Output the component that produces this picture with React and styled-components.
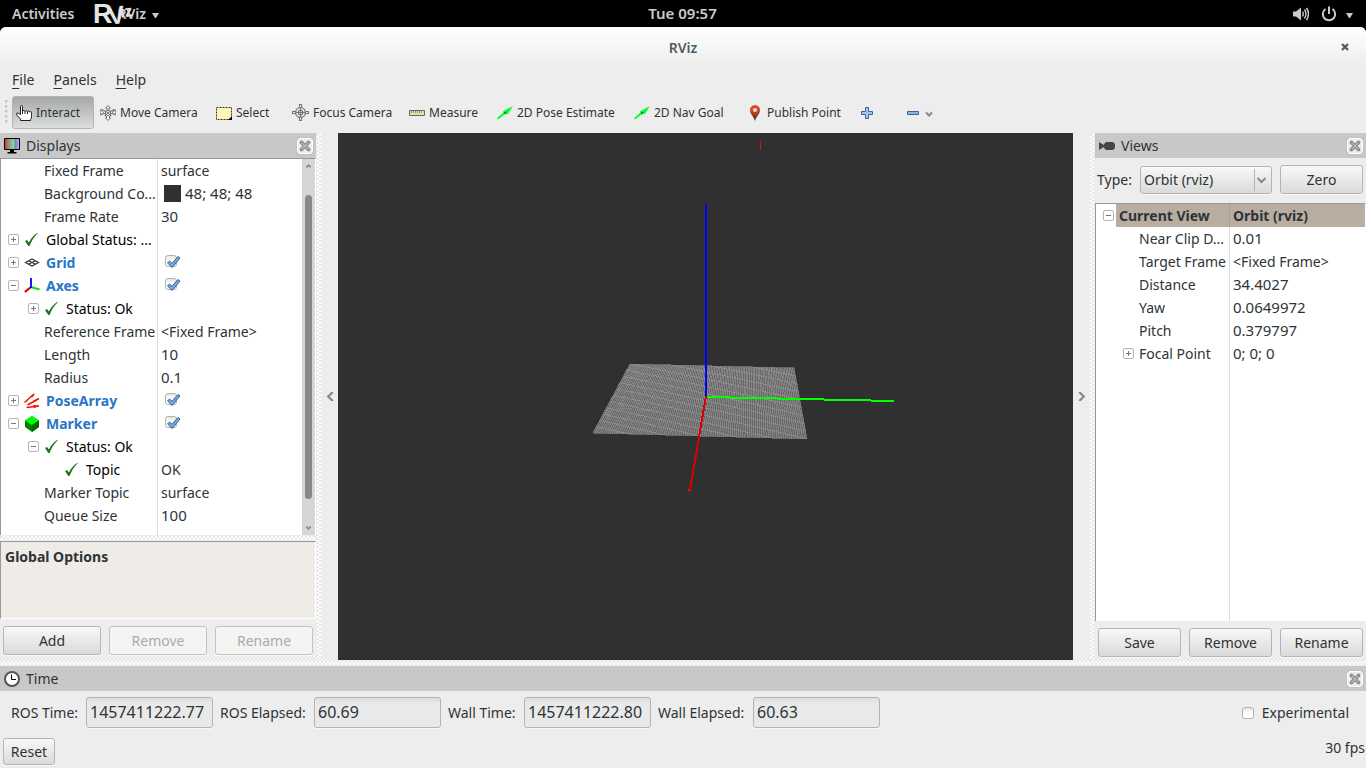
import React, { useState } from 'react'
import styled, { createGlobalStyle, css } from 'styled-components'

const GlobalStyle = createGlobalStyle`
  * {
    box-sizing: border-box;
  }
  body {
    margin: 0;
    background: #000;
  }
  body, button, input, select {
    font-family: 'Noto Sans', 'Open Sans', sans-serif;
    font-size: 14px;
    color: #2e3436;
  }
`

const Desktop = styled.div`
  display: flex;
  flex-direction: column;
  min-height: 100vh;
  background: #000;
`

const TopBar = styled.header`
  display: grid;
  grid-template-columns: 1fr auto 1fr;
  align-items: center;
  height: 27px;
  padding: 0 13px 0 12px;
  color: #ccc;
`

const TopGroup = styled.div`
  display: flex;
  align-items: center;
  gap: ${props => props.$gap}px;
  justify-content: ${props => (props.$end ? 'flex-end' : 'flex-start')};
`

const TopButton = styled.button`
  position: relative;
  display: flex;
  align-items: center;
  gap: ${props => props.$gap || 6}px;
  padding: 0;
  border: 0;
  background: none;
  color: #ccc;
  font-size: ${props => (props.$clock ? 15 : 14)}px;
  font-weight: 600;
  line-height: 27px;
`

const MenuArrow = styled.span`
  width: 7px;
  margin-top: 4px;
  border: solid transparent;
  border-width: 5px 3px 0;
  border-top-color: #ccc;
`

const Logo = styled.svg`
  position: absolute;
  left: -24px;
  top: 0;
  overflow: visible;
  pointer-events: none;
`

const Window = styled.div`
  display: flex;
  flex: 1;
  flex-direction: column;
  background: #ededed;
  border-radius: 6px 6px 0 0;
`

const TitleBar = styled.div`
  display: grid;
  grid-template-columns: 1fr auto 1fr;
  align-items: center;
  height: 40px;
  padding: 0 17px;
  border-radius: 6px 6px 0 0;
  background: linear-gradient(#fff, #ededed);
`

const Title = styled.h1`
  grid-column: 2;
  margin: 0;
  font-size: 14px;
  font-weight: 600;
  color: #4f5d63;
`

const PlainButton = styled.button`
  display: flex;
  justify-self: end;
  padding: 0;
  border: 0;
  background: none;
`

const MenuBar = styled.nav`
  display: flex;
  gap: 19px;
  height: 27px;
  padding: 0 12px 2px;
`

const MenuItem = styled.button`
  padding: 0;
  border: 0;
  background: none;
  line-height: 25px;

  &::first-letter {
    text-decoration: underline;
    text-underline-offset: 3px;
  }
`

const ToolBar = styled.div`
  display: flex;
  gap: 2px;
  height: 39px;
  padding: 2px 5px 4px;
`

const Grip = styled.div`
  width: 5px;
  margin: 4px 0;
  background: radial-gradient(circle at 1px 1px, #c4c4c4 1px, transparent 2px) 0 0 / 5px 5px;
`

const Tool = styled.button`
  display: flex;
  align-items: center;
  gap: 4px;
  width: ${props => props.$width}px;
  padding: 0 3px;
  border: 1px solid transparent;
  border-radius: 3px;
  background: none;
  font-size: 12px;
  white-space: nowrap;
  ${props =>
    props.$active &&
    css`
      border-color: #b4b6b4;
      background: linear-gradient(#a5a8a4, #dcdedc);
    `}
`

const Main = styled.main`
  display: flex;
  flex: 1;
`

const Dock = styled.section`
  display: flex;
  flex-direction: column;
  width: ${props => props.$width}px;
`

const DockHeader = styled.div`
  display: flex;
  align-items: center;
  gap: 6px;
  height: 25px;
  padding: 0 3px 0 4px;
  background: #c8c8c8;
`

const DockTitle = styled.h2`
  flex: 1;
  margin: 0;
  font-size: 14px;
  font-weight: 400;
`

const CloseBox = styled.button`
  display: flex;
  align-items: center;
  justify-content: center;
  width: 16px;
  height: 16px;
  padding: 0;
  border: 1px solid #fff;
  border-radius: 3px;
  background: #ececec;
  box-shadow: 0 0 1px #888;
`

const Splitter = styled.div`
  flex: none;
  ${props => (props.$vertical ? 'width: 6px;' : 'height: 6px;')}
  border: 1px solid #ededed;
  background: repeating-conic-gradient(#fff 0 25%, #e8e8e8 0 50%) 0 0 / 4px 4px;
`

const Collapse = styled.button`
  display: flex;
  flex: none;
  align-items: center;
  justify-content: center;
  width: 16px;
  padding: 0;
  border: 0;
  background: none;
`

const Viewport = styled.div`
  flex: 1;
  min-width: 0;
  background: #303030;

  svg {
    display: block;
    width: 100%;
    height: 100%;
  }
`

const TreeBox = styled.div`
  display: flex;
  flex: 1;
  border: solid #999;
  border-width: 1px 1px 0 1px;
  border-right-color: #fff;
  background: #fff;
`

const TreeArea = styled.div`
  flex: 1;
  background: linear-gradient(#ddd, #ddd) ${props => props.$nameWidth}px 0 / 1px 100% no-repeat;
`

const Tree = styled.table`
  width: 100%;
  border-collapse: collapse;
  table-layout: fixed;
`

const NameCol = styled.col`
  width: ${props => props.$width + 1}px;
`

const NameCell = styled.td`
  height: 23px;
  padding: 0 1px 0 ${props => 7 + props.$level * 20}px;
`

const NameInner = styled.div`
  display: flex;
  align-items: center;
  height: 23px;

  svg {
    flex: none;
    margin-right: 6px;
  }
`

const NameText = styled.span`
  white-space: nowrap;
  line-height: 23px;
  color: ${props => props.$color || '#2e3436'};
  font-weight: ${props => (props.$bold ? 700 : 400)};
`

const Expander = styled.button`
  flex: none;
  width: 11px;
  height: 11px;
  margin-right: 5px;
  padding: 0;
  border: 1px solid #b5b5b5;
  border-radius: 2px;
  background: ${props =>
      !props.$open && 'linear-gradient(#777, #777) center / 1px 5px no-repeat,'}
    linear-gradient(#777, #777) center / 5px 1px no-repeat, #fff;
`

const ExpanderSpace = styled.span`
  flex: none;
  width: 16px;
`

const ValueCell = styled.td`
  height: 23px;
  padding: 0 3px;
  line-height: 23px;
  font-size: ${props => (props.$numeric ? 15 : 14)}px;
  white-space: nowrap;
`

const Row = styled.tr`
  ${props =>
    props.$selected &&
    css`
      font-weight: 700;

      td:first-child {
        background: linear-gradient(#b9aca1, #b9aca1) 20px 0 no-repeat;
        box-shadow: inset -1px 0 #a99e94;
      }
      td:last-child {
        background: #b9aca1;
      }
    `}
`

const ColorValue = styled.span`
  display: flex;
  align-items: center;
  gap: 4px;
  padding-left: 3px;

  &::before {
    content: '';
    width: 17px;
    height: 17px;
    background: #303030;
  }
`

const CheckHolder = styled.label`
  position: relative;
  display: block;
  width: 18px;
  height: 18px;

  svg {
    position: absolute;
    left: 5px;
    top: 0;
    pointer-events: none;
  }
`

const CheckBox = styled.input`
  appearance: none;
  display: block;
  width: 12px;
  height: 12px;
  margin: ${props => props.$margin || '0'};
  border: 1px solid #b3b3a8;
  border-radius: 3px;
  background: linear-gradient(#e6e6e2, #fff 50%);
`

const ScrollBar = styled.div`
  display: flex;
  flex-direction: column;
  align-items: center;
  justify-content: space-between;
  width: 13px;
  padding: 4px 0;
  background: #d6d6d6;
`

const ScrollTrack = styled.div`
  flex: 1;
  width: 7px;
  padding: 25px 0;
`

const ScrollThumb = styled.div`
  height: 100%;
  border-radius: 4px;
  background: #858988;
`

const Description = styled.div`
  height: 78px;
  padding: 5px 4px;
  border: 1px solid #fff;
  border-top-color: #999;
  border-left-color: #999;
  background: #efebe7;
  font-weight: 700;
`

const ButtonRow = styled.div`
  display: flex;
  gap: 8px;
  padding: ${props => props.$padding};
`

const Button = styled.button`
  flex: ${props => (props.$width ? 'none' : 1)};
  width: ${props => (props.$width ? `${props.$width}px` : 'auto')};
  height: ${props => props.$height || 29}px;
  padding: 0 0 1px;
  border: 1px solid #b4b4b4;
  border-radius: 3px;
  background: linear-gradient(#f8f8f8, #dadada);
  box-shadow: 0 1px #f8f8f8;

  &:disabled {
    border-color: #c2c2c0;
    background: #f4f4f2;
    color: #a9acaa;
  }
`

const TypeRow = styled.div`
  display: flex;
  align-items: center;
  height: 45px;
  padding: 0 3px 2px 2px;
`

const TypeLabel = styled.label`
  width: 43px;
`

const SelectHolder = styled.div`
  position: relative;
  flex: 1;
  margin-right: 8px;

  svg {
    position: absolute;
    right: 0;
    top: 0;
    pointer-events: none;
  }
`

const Select = styled.select`
  appearance: none;
  display: block;
  width: 100%;
  height: 28px;
  padding: 0 3px;
  border: 1px solid #b4b4b4;
  border-radius: 3px;
  background: linear-gradient(#f8f8f8, #dadada);
  box-shadow: 0 1px #f8f8f8;
`

const TimeRow = styled.div`
  display: flex;
  align-items: center;
  gap: 7px;
  height: 44px;
  padding: 0 17px 1px 11px;
`

const TimeField = styled.div`
  display: flex;
  align-items: center;
`

const TimeLabel = styled.label`
  width: ${props => props.$width}px;
  white-space: nowrap;
`

const TimeInput = styled.input`
  width: 127px;
  height: 31px;
  padding: 0 3px 1px;
  border: 1px solid #b4b4b4;
  border-radius: 3px;
  background: linear-gradient(#dedede, #e9e9e9 6px);
  box-shadow: 0 1px #f8f8f8;
  font-size: 16px;
`

const Experimental = styled.label`
  display: flex;
  align-items: center;
  gap: 8px;
  margin-left: auto;
`

const StatusRow = styled.div`
  display: flex;
  justify-content: space-between;
  padding: 3px 1px 3px 3px;
`

const Fps = styled.span`
  line-height: 20px;
`

const Cross = () => (
  <svg width="12" height="12" viewBox="0 0 12 12">
    <path d="M2.500 2.500l7 7M9.500 2.500l-7 7" stroke="#858782" strokeWidth="3.600" strokeLinecap="round" />
    <path d="M2.500 2.500l7 7M9.500 2.500l-7 7" stroke="#b9bab6" strokeWidth="1.400" />
  </svg>
)

const Chevron = ({ d, size = 8, color = '#888a85', width = 2 }) => (
  <svg width={size} height={size} viewBox="0 0 8 8" fill="none">
    <path d={d} stroke={color} strokeWidth={width} />
  </svg>
)

const UP = 'M1.500 5L4 2.500 6.500 5'
const DOWN = 'M1.500 3L4 5.500 6.500 3'

const Svg = ({ children, size = 16 }) => (
  <svg width={size} height={size} viewBox="0 0 16 16" fill="none">
    {children}
  </svg>
)

const icons = {
  hand: (
    <Svg>
      <path
        d="M4.500 9.500V1.800q0-1.200 1-1.200t1 1.200v4.700q.2-1 1.200-1t1.300 1.200q.2-1 1.200-1t1.300 1.200q.2-.9 1.200-.9t1.200 1.200q.2-.6.900-.6.800 0 .8 1.200V12q0 1.500-1 2.200v1.300H4.500v-1.400L.8 10Q.1 8.800 1 8q1-.5 2 .7z"
        fill="#fff"
        stroke="#222"
      />
      <path d="M6.500 6v3M9 7v2M11.500 7v2" stroke="#222" />
    </Svg>
  ),
  move: (
    <Svg>
      <g stroke="#666" fill="#f2f2f2" strokeWidth=".9">
        <path d="M8 .5l2.300 2.500H9v3h4V4.500L15.600 5v5L13 9 10 8l1 3H9.500v2h1L8 15.500 5.500 13h1v-2H5l1-3-3 1L.4 10V5L3 4.500 4 6h3V3H5.700z" />
        <path d="M8 5l3 3-3 3-3-3z M.8 5l3 2.500-3 2.500M15.200 5l-3 2.500 3 2.500M4.500 5.500L8 8l3.500-2.500M5 11l3-3 3 3" />
      </g>
    </Svg>
  ),
  select: (
    <Svg>
      <path d="M.5 2.500h15v12H.5z" fill="#fdf6b8" stroke="#333" strokeDasharray="2 1" />
      <path d="M16 11v4h-4z" fill="#000" />
    </Svg>
  ),
  focus: (
    <Svg size={17}>
      <g stroke="#777">
        <circle cx="8" cy="8" r="4.700" />
        <circle cx="8" cy="8" r="2.200" />
        <path d="M8 3v10M3 8h10" />
        <path d="M7 .5h2v3H7zM7 12.500h2v3H7zM.5 7h3v2h-3zM12.500 7h3v2h-3z" fill="#eee" />
      </g>
    </Svg>
  ),
  measure: (
    <Svg>
      <path d="M.5 5.500h15v5H.5z" fill="#e6dfa8" stroke="#666" />
      <path d="M2.500 6v2M4.500 6v2M6.500 6v2M8.500 6v2M10.500 6v2M12.500 6v2" stroke="#9a956c" />
    </Svg>
  ),
  arrow: (
    <Svg>
      <path d="M1 14.500L0 13l6.500-5.500L6 6.200 16 1l-5.500 8.500-1.300-1.300z" fill="#0f3" />
      <path d="M6.500 7.500L9.500 7 8.500 9.500z" fill="#067a1c" />
    </Svg>
  ),
  pin: (
    <Svg>
      <defs>
        <linearGradient id="pin" x1="0" y1="0" x2="0" y2="1">
          <stop offset=".3" stopColor="#d9482a" />
          <stop offset="1" stopColor="#4a2e14" />
        </linearGradient>
      </defs>
      <path d="M8 0a5 5 0 0 1 5 5.200C13 9 9.500 11 8 16 6.500 11 3 9 3 5.200A5 5 0 0 1 8 0z" fill="url(#pin)" />
      <circle cx="8" cy="5" r="2" fill="#f3d8d0" />
    </Svg>
  ),
  plus: (
    <Svg>
      <path d="M6.500 2.500h3v4h4v3h-4v4h-3v-4h-4v-3h4z" fill="#a6c4e8" stroke="#3465a4" />
    </Svg>
  ),
  minus: (
    <Svg>
      <path d="M2.500 6.500h11v3h-11z" fill="#8fb2dd" stroke="#3465a4" />
    </Svg>
  ),
  display: (
    <Svg>
      <defs>
        <linearGradient id="screen">
          <stop offset="0" stopColor="#a84848" />
          <stop offset=".33" stopColor="#c88080" />
          <stop offset=".34" stopColor="#68b868" />
          <stop offset=".66" stopColor="#98e098" />
          <stop offset=".67" stopColor="#7878d0" />
          <stop offset="1" stopColor="#b0b0f0" />
        </linearGradient>
      </defs>
      <path d="M.5.5h15v11H.5z" fill="url(#screen)" stroke="#000" />
      <path d="M6 12h4v2h2.500v1.500h-9V14H6z" fill="#000" />
    </Svg>
  ),
  camera: (
    <Svg>
      <path d="M0 4l5 3V6l2-2h7l2 2v4l-2 2H7l-2-2V9l-5 3z" fill="#444" />
    </Svg>
  ),
  clock: (
    <Svg>
      <circle cx="8" cy="8" r="7" fill="#fff" stroke="#555" strokeWidth="2" />
      <path d="M7.500 3.500v5H12" stroke="#000" />
    </Svg>
  ),
  ok: (
    <Svg>
      <path d="M1 9l2-1 2 2.500C7 6.500 9.500 3 13.500.8l.3.5C10 5 7.500 9 5.500 14H4.300z" fill="#1c741c" />
    </Svg>
  ),
  grid: (
    <Svg>
      <path
        d="M1.500 7.500L8 4l6.500 3.500L8 11zM4.500 5.700l7 3.600M11.500 5.700l-7 3.600"
        stroke="#333"
        strokeWidth="1.200"
      />
    </Svg>
  ),
  axes: (
    <Svg>
      <path d="M7 9L.8 14" stroke="#d80000" strokeWidth="2.200" />
      <path d="M7 9l8.500 2.500" stroke="#00e020" strokeWidth="2.200" />
      <path d="M7 10V0" stroke="#0000f0" strokeWidth="1.800" />
    </Svg>
  ),
  poses: (
    <Svg>
      <path
        d="M.5 9.500L10 1M3.500 12L15 5.500M2.500 14.500L15 13"
        stroke="#f01800"
        strokeWidth="1.500"
      />
      <path d="M5 4.500L11 0 9 4zM9 7.500l6-2.500-4 4zM9 12l6 .5-5 3z" fill="#f01800" />
    </Svg>
  ),
  cube: (
    <Svg>
      <path d="M8 0l7 4.500v6.500L8 16l-7-5V4.500z" fill="#008000" />
      <path d="M8 0l7 4.500L8 9 1 4.500z" fill="#0f0" />
      <path d="M8 9l7-4.500V11l-7 5z" fill="#006800" />
    </Svg>
  )
}

const tools = [
  { label: 'Interact', icon: 'hand', width: 82 },
  { label: 'Move Camera', icon: 'move', width: 114 },
  { label: 'Select', icon: 'select', width: 74 },
  { label: 'Focus Camera', icon: 'focus', width: 115 },
  { label: 'Measure', icon: 'measure', width: 86 },
  { label: '2D Pose Estimate', icon: 'arrow', width: 135 },
  { label: '2D Nav Goal', icon: 'arrow', width: 111 },
  { label: 'Publish Point', icon: 'pin', width: 110 }
]

const BLUE = '#2a76c6'

const displayRows = [
  { level: 1, name: 'Fixed Frame', value: 'surface' },
  { level: 1, name: 'Background Co...', value: <ColorValue>48; 48; 48</ColorValue>, numeric: true },
  { level: 1, name: 'Frame Rate', value: '30', numeric: true },
  { level: 0, open: false, icon: 'ok', name: 'Global Status: ...', color: '#000' },
  { level: 0, open: false, icon: 'grid', name: 'Grid', color: BLUE, bold: true, check: true },
  { level: 0, open: true, icon: 'axes', name: 'Axes', color: BLUE, bold: true, check: true },
  { level: 1, open: false, icon: 'ok', name: 'Status: Ok', color: '#000' },
  { level: 1, name: 'Reference Frame', value: '<Fixed Frame>' },
  { level: 1, name: 'Length', value: '10', numeric: true },
  { level: 1, name: 'Radius', value: '0.1', numeric: true },
  { level: 0, open: false, icon: 'poses', name: 'PoseArray', color: BLUE, bold: true, check: true },
  { level: 0, open: true, icon: 'cube', name: 'Marker', color: BLUE, bold: true, check: true },
  { level: 1, open: true, icon: 'ok', name: 'Status: Ok', color: '#000' },
  { level: 2, icon: 'ok', name: 'Topic', color: '#000', value: 'OK' },
  { level: 1, name: 'Marker Topic', value: 'surface' },
  { level: 1, name: 'Queue Size', value: '100', numeric: true }
]

const viewRows = [
  { level: 0, open: true, name: 'Current View', value: 'Orbit (rviz)', bold: true, selected: true },
  { level: 1, name: 'Near Clip D...', value: '0.01', numeric: true },
  { level: 1, name: 'Target Frame', value: '<Fixed Frame>' },
  { level: 1, name: 'Distance', value: '34.4027', numeric: true },
  { level: 1, name: 'Yaw', value: '0.0649972', numeric: true },
  { level: 1, name: 'Pitch', value: '0.379797', numeric: true },
  { level: 1, open: false, name: 'Focal Point', value: '0; 0; 0', numeric: true }
]

const times = [
  { id: 'ros-time', label: 'ROS Time:', value: '1457411222.77', width: 75 },
  { id: 'ros-elapsed', label: 'ROS Elapsed:', value: '60.69', width: 94 },
  { id: 'wall-time', label: 'Wall Time:', value: '1457411222.80', width: 76 },
  { id: 'wall-elapsed', label: 'Wall Elapsed:', value: '60.63', width: 95 }
]

const EnabledCheck = ({ name }) => {
  const [checked, setChecked] = useState(true)
  return (
    <CheckHolder>
      <CheckBox
        type="checkbox"
        aria-label={name}
        $margin="2px 0 0 4px"
        checked={checked}
        onChange={() => setChecked(!checked)}
      />
      {checked && (
        <svg width="15" height="15" viewBox="0 0 15 15">
          <path
            d="M1.500 8l2-2L6 8.300 12 1.500l2 1.500-7.800 9.500z"
            fill="#7aa7dc"
            stroke="#2f5f9e"
          />
        </svg>
      )}
    </CheckHolder>
  )
}

const PropertyTree = ({ rows, nameWidth, label }) => (
  <TreeArea $nameWidth={nameWidth}>
    <Tree aria-label={label}>
      <colgroup>
        <NameCol $width={nameWidth} />
        <col />
      </colgroup>
      <tbody>
        {rows.map((row, i) => (
          <Row key={i} $selected={row.selected}>
            <NameCell $level={row.level}>
              <NameInner>
                {row.open === undefined ? (
                  <ExpanderSpace />
                ) : (
                  <Expander $open={row.open} aria-label={`Toggle ${row.name}`} />
                )}
                {row.icon && icons[row.icon]}
                <NameText $color={row.color} $bold={row.bold}>
                  {row.name}
                </NameText>
              </NameInner>
            </NameCell>
            <ValueCell $numeric={row.numeric}>
              {row.check ? <EnabledCheck name={row.name} /> : row.value}
            </ValueCell>
          </Row>
        ))}
      </tbody>
    </Tree>
  </TreeArea>
)

// corners of the ground plane: far left, far right, near right, near left
const plane = [[630, 364], [794, 368], [807, 439], [593, 433]]

const mix = (a, b, t) => [a[0] + (b[0] - a[0]) * t, a[1] + (b[1] - a[1]) * t]

const gridLines = (a, b, c, d, count) =>
  Array.from({ length: count + 1 }, (_, i) => [mix(a, b, i / count), mix(d, c, i / count)])

const Scene = () => {
  const [fl, fr, nr, nl] = plane
  const lines = [...gridLines(fl, fr, nr, nl, 100), ...gridLines(fl, nl, nr, fr, 80)]
  return (
    <svg viewBox="338 133 735 527" role="img" aria-label="3D view">
      <g stroke="#a0a0a4" strokeOpacity=".5" shapeRendering="crispEdges">
        {lines.map(([p, q], i) => (
          <line key={i} x1={p[0]} y1={p[1]} x2={q[0]} y2={q[1]} />
        ))}
      </g>
      <g shapeRendering="crispEdges" strokeWidth="2">
        <path d="M706 397L894 401" stroke="#0f0" />
        <path d="M706 204V397" stroke="#00f" />
        <path d="M706 396L690 490" stroke="#d80000" />
        <path d="M688 490h3" stroke="#f00" />
        <path d="M760.500 141v9" stroke="#f00" strokeWidth="1" />
      </g>
    </svg>
  )
}

const Header = ({ icon, title }) => (
  <DockHeader>
    {icons[icon]}
    <DockTitle>{title}</DockTitle>
    <CloseBox aria-label={`Close ${title}`}>
      <Cross />
    </CloseBox>
  </DockHeader>
)

const App = () => {
  const [tool, setTool] = useState('Interact')
  return (
    <Desktop>
      <GlobalStyle />
      <TopBar>
        <TopGroup $gap={43}>
          <TopButton>Activities</TopButton>
          <TopButton>
            <Logo width="46" height="27" viewBox="0 0 46 27" aria-hidden="true">
              <g fill="#e4e4e4" fontFamily="'Liberation Sans', sans-serif" fontWeight="700">
                <text x="0" y="23" fontSize="27">R</text>
                <text x="15" y="24" fontSize="25" transform="rotate(-8 22 16)">V</text>
                <text x="27" y="17" fontSize="16" transform="rotate(-8 32 12)">iz</text>
              </g>
            </Logo>
            RViz
            <MenuArrow />
          </TopButton>
        </TopGroup>
        <TopButton $clock>Tue 09:57</TopButton>
        <TopGroup $gap={12} $end>
          <Svg>
            <path d="M0 5.500h3L8 1.500v13l-5-4H0z" fill="#ccc" />
            <path
              d="M9.500 5.500q1.500 2.500 0 5M11.500 3.500q3 4.500 0 9M13.500 2q4 6 0 12"
              stroke="#ccc"
              strokeWidth="1.400"
            />
          </Svg>
          <TopButton $gap={9} aria-label="Power">
            <Svg>
              <path d="M4.500 3a6.200 6.200 0 1 0 7 0M8 .5V8" stroke="#ccc" strokeWidth="2" />
            </Svg>
            <MenuArrow />
          </TopButton>
        </TopGroup>
      </TopBar>
      <Window>
        <TitleBar>
          <Title>RViz</Title>
          <PlainButton aria-label="Close window">
            <Chevron d="M1 1l6 6M7 1L1 7" color="#4f5d63" width={2.4} />
          </PlainButton>
        </TitleBar>
        <MenuBar>
          <MenuItem>File</MenuItem>
          <MenuItem>Panels</MenuItem>
          <MenuItem>Help</MenuItem>
        </MenuBar>
        <ToolBar>
          <Grip />
          {tools.map(({ label, icon, width }) => (
            <Tool
              key={label}
              $width={width}
              $active={label === tool}
              onClick={() => setTool(label)}
            >
              {icons[icon]}
              {label}
            </Tool>
          ))}
          <Tool $width={44} aria-label="Add tool">
            {icons.plus}
          </Tool>
          <Tool $width={36} aria-label="Remove tool">
            {icons.minus}
            <Chevron d="M1 3.500l3 3 3-3" />
          </Tool>
        </ToolBar>
        <Main>
          <Dock $width={316}>
            <Header icon="display" title="Displays" />
            <TreeBox>
              <PropertyTree rows={displayRows} nameWidth={156} label="Displays" />
              <ScrollBar>
                <Chevron d={UP} size={7} />
                <ScrollTrack>
                  <ScrollThumb />
                </ScrollTrack>
                <Chevron d={DOWN} size={7} />
              </ScrollBar>
            </TreeBox>
            <Splitter />
            <Description>Global Options</Description>
            <ButtonRow $padding="7px 3px 5px">
              <Button>Add</Button>
              <Button disabled>Remove</Button>
              <Button disabled>Rename</Button>
            </ButtonRow>
          </Dock>
          <Splitter $vertical />
          <Collapse aria-label="Hide left panel">
            <Chevron d="M6 0L2 4l4 4" size={9} />
          </Collapse>
          <Viewport>
            <Scene />
          </Viewport>
          <Collapse aria-label="Hide right panel">
            <Chevron d="M2 0l4 4-4 4" size={9} />
          </Collapse>
          <Splitter $vertical />
          <Dock $width={271}>
            <Header icon="camera" title="Views" />
            <TypeRow>
              <TypeLabel htmlFor="view-type">Type:</TypeLabel>
              <SelectHolder>
                <Select id="view-type" defaultValue="orbit">
                  <option value="orbit">Orbit (rviz)</option>
                </Select>
                <svg width="20" height="28" viewBox="0 0 20 28" fill="none">
                  <path d="M2.500 3v22" stroke="#b4b4b4" />
                  <path d="M5.500 12l4 4 4-4" stroke="#888a85" strokeWidth="2" />
                </svg>
              </SelectHolder>
              <Button $width={83}>Zero</Button>
            </TypeRow>
            <TreeBox>
              <PropertyTree rows={viewRows} nameWidth={133} label="Views" />
            </TreeBox>
            <ButtonRow $padding="7px 3px 3px">
              <Button>Save</Button>
              <Button>Remove</Button>
              <Button>Rename</Button>
            </ButtonRow>
          </Dock>
        </Main>
        <Splitter />
        <Header icon="clock" title="Time" />
        <TimeRow>
          {times.map(({ id, label, value, width }) => (
            <TimeField key={id}>
              <TimeLabel htmlFor={id} $width={width}>
                {label}
              </TimeLabel>
              <TimeInput id={id} readOnly value={value} />
            </TimeField>
          ))}
          <Experimental>
            <CheckBox type="checkbox" />
            Experimental
          </Experimental>
        </TimeRow>
        <StatusRow>
          <Button $width={52} $height={27}>
            Reset
          </Button>
          <Fps>30 fps</Fps>
        </StatusRow>
      </Window>
    </Desktop>
  )
}

export default App
